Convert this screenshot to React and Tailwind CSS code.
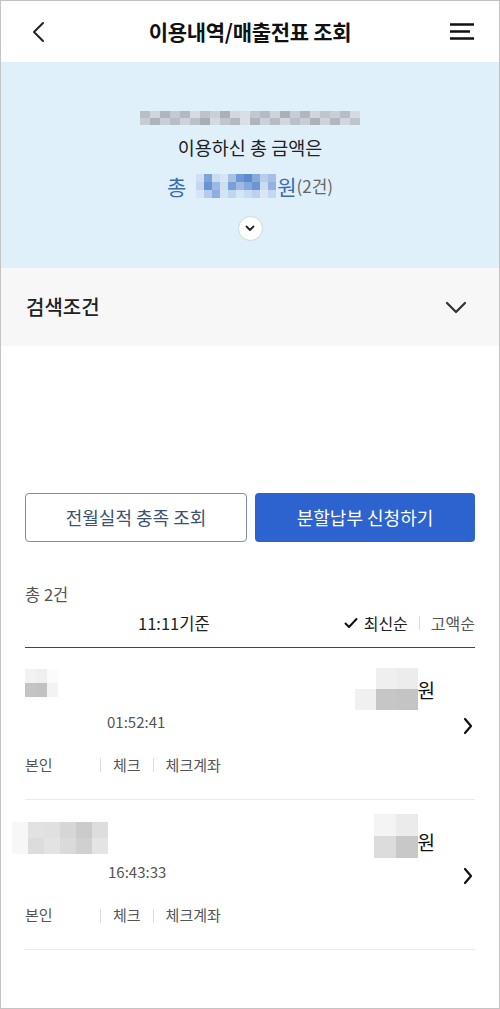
import React from 'react';

// pixelated blur blocks (masked values in the screenshot)
const Mosaic = ({ rows, cell, className = '' }) => (
  <div className={`flex flex-col ${className}`}>
    {rows.map((row, i) => (
      <div key={i} className="flex">
        {row.map((c, j) => (
          <div key={j} style={{ width: cell[0], height: cell[1], backgroundColor: c }} />
        ))}
      </div>
    ))}
  </div>
);

const ChevronRight = () => (
  <svg width="12" height="20" viewBox="0 0 12 20" fill="none" stroke="#111" strokeWidth="2.2" strokeLinecap="round" strokeLinejoin="round">
    <path d="M3 3l6 7-6 7" />
  </svg>
);

const Tags = () => (
  <div className="flex items-center text-[15px] text-[#555]">
    <span className="w-[75px]">본인</span>
    <span className="h-[14px] w-px bg-[#ddd]" />
    <span className="px-[12px]">체크</span>
    <span className="h-[14px] w-px bg-[#ddd]" />
    <span className="pl-[12px]">체크계좌</span>
  </div>
);

const App = () => {
  const dateRows = [
    ['#b8bfc6', '#cfd6dc', '#aeb5bc', '#c3cad0', '#b2b9c0', '#d5dbe0', '#bcc3c9', '#c9d0d6', '#aab1b8', '#d2d8dd', '#d9dfe4', '#c0c7cd', '#b4bbc2', '#cdd4da', '#a9b0b7', '#c6cdd3', '#b0b7be', '#d0d6db', '#bec5cb', '#c8cfd5', '#b6bdc4', '#d4dadf'],
    ['#c5ccd2', '#adb4bb', '#c8cfd5', '#b7bec5', '#cdd3d9', '#bac1c7', '#a8afb6', '#d3d9de', '#bfc6cc', '#b3bac1', '#d9dfe4', '#aeb5bc', '#cad1d7', '#b5bcc3', '#d1d7dc', '#b9c0c6', '#c7ced4', '#abb2b9', '#cdd3d9', '#b1b8bf', '#d0d6dc', '#bdc4ca'],
  ];
  const amountRows = [
    ['#cfe0f4', '#7fa4d8', '#c9dcf2', '#d6e5f6', '#a7c1e6', '#6f98d6', '#5e8bd0', '#87abdd', '#b7cdeb', '#a5c0e6'],
    ['#c3d7f0', '#6a93d3', '#9db9e3', '#cddff3', '#7aa0d9', '#9fbbe4', '#86a9dc', '#6c95d4', '#cadcf2', '#93b2e0'],
    ['#d5e4f6', '#b6cceb', '#8eafdf', '#d3e2f5', '#c1d5ef', '#d6e5f6', '#c8dbf1', '#bcd1ed', '#d8e6f6', '#c4d8f0'],
  ];

  return (
    <div className="w-[500px] h-[1009px] bg-white border border-[#c4c4c4] overflow-hidden flex flex-col" style={{ fontFamily: '"Noto Sans CJK KR", "Noto Sans", sans-serif' }}>
      {/* header */}
      <header className="h-[61px] shrink-0 flex items-center justify-between px-[24px] relative">
        <svg width="20" height="24" viewBox="0 0 20 24" fill="none" stroke="#222" strokeWidth="2" strokeLinecap="round" strokeLinejoin="round" className="ml-[2px]">
          <path d="M16 3L7 12l9 9" />
        </svg>
        <h1 className="absolute left-0 right-0 text-center text-[21px] font-bold text-[#111] tracking-[-0.3px] pointer-events-none">이용내역/매출전표 조회</h1>
        <svg width="26" height="20" viewBox="0 0 26 20" fill="none" stroke="#111" strokeWidth="2.6">
          <path d="M1 2.5h24M1 9.5h20M1 16.5h24" />
        </svg>
      </header>

      {/* summary */}
      <section className="h-[206px] shrink-0 bg-[#dff0fb] flex flex-col items-center pt-[49px]">
        <Mosaic rows={dateRows} cell={[10, 7]} />
        <p className="mt-[9px] text-[18.5px] text-[#222] leading-[26px]">이용하신 총 금액은</p>
        <div className="mt-[12px] flex items-center text-[21px] text-[#3a6db5] leading-[28px]">
          <span>총</span>
          <Mosaic rows={amountRows} cell={[8, 8]} className="ml-[10px] mr-[1px]" />
          <span>원</span>
          <span className="text-[17px] text-[#666]">(2건)</span>
        </div>
        <button className="mt-[16px] w-[25px] h-[25px] rounded-full bg-white border border-[#d5d5d5] flex items-center justify-center">
          <svg width="10" height="7" viewBox="0 0 10 7" fill="none" stroke="#222" strokeWidth="1.8" strokeLinecap="round" strokeLinejoin="round">
            <path d="M1.5 1.5L5 5l3.5-3.5" />
          </svg>
        </button>
      </section>

      {/* search condition */}
      <section className="h-[78px] shrink-0 bg-[#f7f7f7] flex items-center justify-between pl-[25px] pr-[32px]">
        <span className="text-[20px] text-[#222] font-medium">검색조건</span>
        <svg width="22" height="13" viewBox="0 0 22 13" fill="none" stroke="#333" strokeWidth="2.3" strokeLinecap="round" strokeLinejoin="round">
          <path d="M2 2l9 9 9-9" />
        </svg>
      </section>

      {/* body */}
      <main className="flex flex-col px-[24px] pt-[147px]">
        <div className="flex gap-[8px]">
          <button className="flex-1 h-[49px] rounded-[4px] border border-[#7d8fa6] text-[18px] text-[#3b5270]">전월실적 충족 조회</button>
          <button className="flex-1 h-[49px] rounded-[4px] bg-[#2d63cf] text-[18px] text-white">분할납부 신청하기</button>
        </div>

        <div className="mt-[41px] text-[16.5px] text-[#555] leading-[22px]">총 2건</div>
        <div className="mt-[6px] flex items-center justify-between pb-[11px] border-b border-[#444]">
          <span className="ml-[113px] text-[16.5px] text-[#222]">11:11기준</span>
          <div className="flex items-center text-[16px]">
            <svg width="14" height="12" viewBox="0 0 14 12" fill="none" stroke="#111" strokeWidth="2" strokeLinecap="round" strokeLinejoin="round" className="mr-[6px]">
              <path d="M1.5 6.5l3.5 3.5 7.5-8" />
            </svg>
            <span className="text-[#222]">최신순</span>
            <span className="mx-[11px] h-[14px] w-px bg-[#ddd]" />
            <span className="text-[#555]">고액순</span>
          </div>
        </div>

        {/* item 1 */}
        <div className="flex border-b border-[#eaeaea] pt-[20px] pb-[23px]">
          <div className="flex-1 flex flex-col">
            <Mosaic rows={[['#f2f2f2', '#efefef', '#fbfbfb'], ['#c4c4c4', '#c2c2c2', '#f3f3f3']]} cell={[11, 14]} className="mt-[1px]" />
            <span className="mt-[14px] ml-[82px] text-[15px] text-[#555] leading-[22px]">01:52:41</span>
            <div className="mt-[21px]"><Tags /></div>
          </div>
          <div className="flex flex-col items-end">
            <div className="flex items-end pr-[40px]">
              <Mosaic rows={[['#ffffff', '#efefef', '#ececec'], ['#f0f0f0', '#c6c6c6', '#c4c4c4']]} cell={[21, 21]} />
              <span className="text-[19px] text-[#111] leading-[24px] mb-[8px]">원</span>
            </div>
            <div className="mt-[6px] mr-[1px]"><ChevronRight /></div>
          </div>
        </div>

        {/* item 2 */}
        <div className="flex border-b border-[#eaeaea] pt-[14px] pb-[22px]">
          <div className="flex-1 flex flex-col">
            <div className="-ml-[13px] mt-[8px]">
              <Mosaic rows={[['#f7f7f7', '#e2e2e2', '#e0e0e0', '#d6d6d6', '#cbcbcb', '#dddddd'], ['#f7f7f7', '#dcdcdc', '#e3e3e3', '#dadada', '#d0d0d0', '#e4e4e4']]} cell={[16, 16]} />
            </div>
            <span className="mt-[7px] ml-[83px] text-[15px] text-[#555] leading-[22px]">16:43:33</span>
            <div className="mt-[21px]"><Tags /></div>
          </div>
          <div className="flex flex-col items-end">
            <div className="flex items-end pr-[40px]">
              <Mosaic rows={[['#f4f4f4', '#ebebeb'], ['#dcdcdc', '#c8c8c8']]} cell={[22, 22]} />
              <span className="text-[19px] text-[#111] leading-[24px] mb-[4px]">원</span>
            </div>
            <div className="mt-[8px] mr-[1px]"><ChevronRight /></div>
          </div>
        </div>
      </main>
    </div>
  );
};

export default App;
